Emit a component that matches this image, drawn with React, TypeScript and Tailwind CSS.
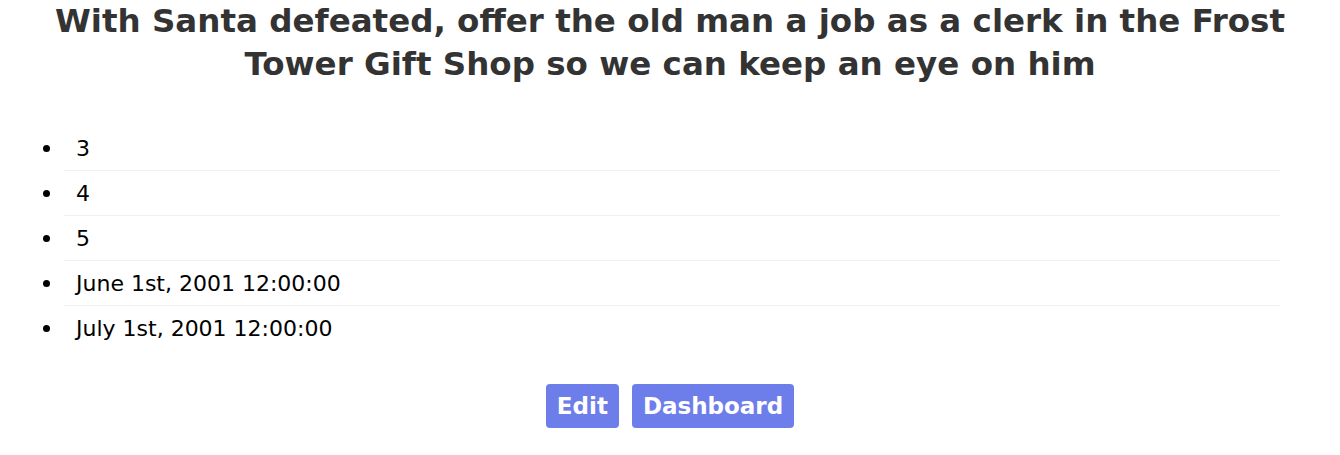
import React from "react";

export default function App() {
  const items = ["3", "4", "5", "June 1st, 2001 12:00:00", "July 1st, 2001 12:00:00"];

  return (
    <div className="min-h-[455px] bg-white font-['DejaVu_Sans',sans-serif]">
      <h1 className="text-center text-[32.5px] font-bold leading-[43px] text-[#333333] px-6">
        With Santa defeated, offer the old man a job as a clerk in the Frost
        <br />
        Tower Gift Shop so we can keep an eye on him
      </h1>

      <ul className="list-disc ml-16 mr-[60px] mt-10 text-black marker:text-[23px]">
        {items.map((item, idx) => (
          <li
            key={idx}
            className="pl-3 h-[45px] leading-[45px] text-[22px] border-b border-[#f0f0f0] last:border-b-0"
          >
            {item}
          </li>
        ))}
      </ul>

      <div className="flex justify-center gap-[13px] mt-[33px]">
        <button className="h-[44px] px-[11px] rounded bg-[#6d7eea] text-white text-[23px] font-bold">
          Edit
        </button>
        <button className="h-[44px] px-[11px] rounded bg-[#6d7eea] text-white text-[23px] font-bold">
          Dashboard
        </button>
      </div>
    </div>
  );
}
